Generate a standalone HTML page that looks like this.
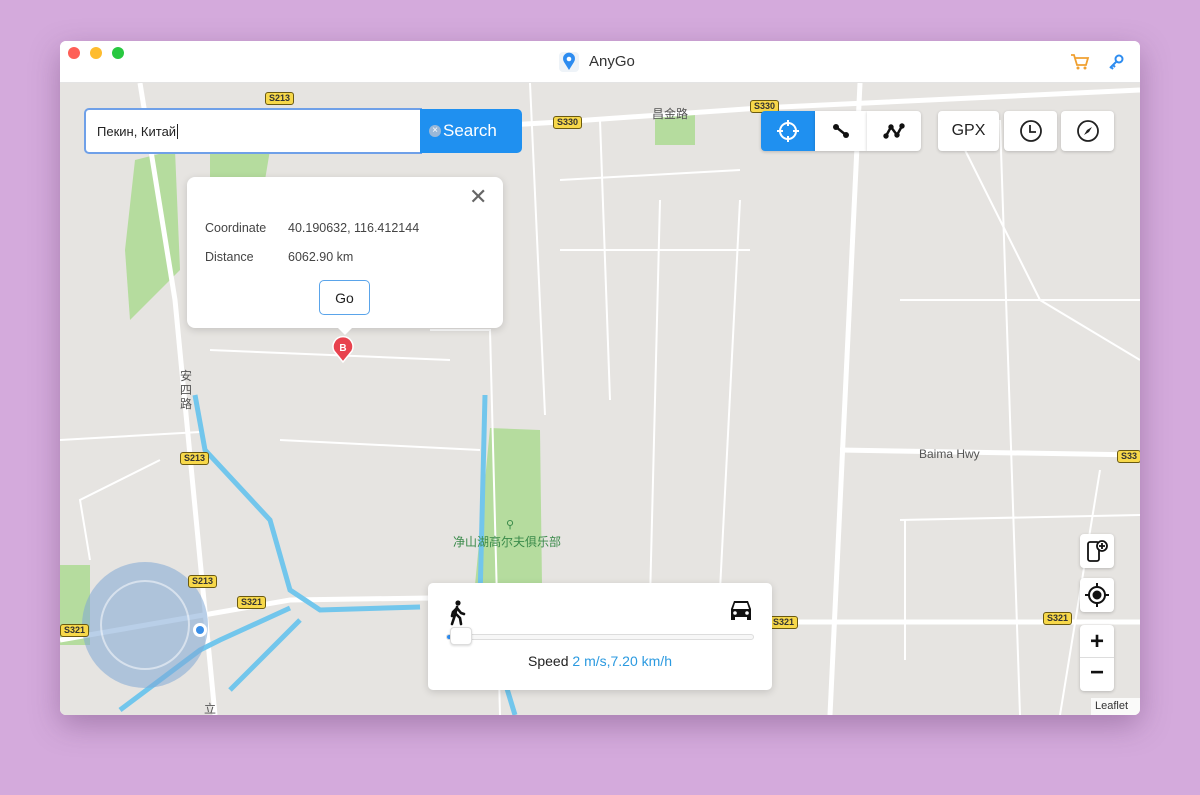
<!DOCTYPE html>
<html><head><meta charset="utf-8"><style>
*{margin:0;padding:0;box-sizing:border-box}
body{width:1200px;height:795px;background:#d4aadc;font-family:"Liberation Sans","Noto Sans CJK SC",sans-serif;position:relative;overflow:hidden}
.win{position:absolute;left:60px;top:41px;width:1080px;height:674px;border-radius:6px;overflow:hidden;background:#fff;box-shadow:0 10px 30px rgba(80,40,90,.35)}
.abs{position:absolute}
.tb{left:0;top:0;width:1080px;height:42px;background:#fff;border-bottom:1px solid #e4e4e4}
.dot{width:12px;height:12px;border-radius:50%;top:6px}
.btn{background:#fff;border-radius:4px;box-shadow:0 1px 3px rgba(0,0,0,.2);display:flex;align-items:center;justify-content:center}
.shield{position:absolute;background:#f7d84a;border:1px solid #6b5a10;border-radius:3px;font-size:9px;font-weight:bold;color:#333;padding:0 3px;line-height:11px}
</style></head><body>
<div class="win">
<svg class="abs" style="left:0;top:42px" width="1080" height="632" viewBox="60 83 1080 632">
<rect x="60" y="83" width="1080" height="632" fill="#e6e4e1"/>
<path d="M135 160 L175 150 L180 270 L130 320 L125 250 Z" fill="#b5dc9e"/>
<path d="M210 150 L270 150 L265 180 L210 180Z" fill="#b5dc9e"/>
<rect x="655" y="115" width="40" height="30" fill="#b5dc9e"/>
<path d="M490 428 L540 430 L542 585 L475 585 Z" fill="#b5dc9e"/>
<rect x="60" y="565" width="30" height="80" fill="#b5dc9e"/>
<g stroke="#fff" stroke-width="5" fill="none">
<path d="M140 83 L175 300 L215 715"/>
<path d="M420 130 L560 122 L760 108 L1140 90"/>
<path d="M60 640 L290 600 L430 598 L760 622 L1140 622"/>
<path d="M840 450 L1140 455"/>
<path d="M860 83 L830 715"/>
</g>
<g stroke="#fff" stroke-width="2" fill="none">
<path d="M530 83 L545 415"/><path d="M60 440 L200 432"/><path d="M900 520 L1140 515"/><path d="M905 520 L905 660"/>
<path d="M960 140 L1040 300 L1140 360"/><path d="M560 180 L740 170"/><path d="M600 120 L610 400"/>
<path d="M660 200 L650 600"/><path d="M740 200 L720 590"/><path d="M1000 120 L1020 715"/><path d="M900 300 L1140 300"/>
<path d="M1100 470 L1060 715"/><path d="M430 330 L490 330 L500 715"/><path d="M210 350 L450 360"/>
<path d="M280 440 L480 450"/><path d="M160 460 L80 500 L90 560"/><path d="M560 250 L750 250"/>
</g>
<g stroke="#72c6ec" stroke-width="5" fill="none">
<path d="M195 395 L205 450 L270 520 L290 590 L320 610 L420 607"/>
<path d="M485 395 L480 600 L515 715"/>
<path d="M120 710 L200 650 L220 640 L290 608"/>
<path d="M230 690 L300 620"/>
</g>
<circle cx="145" cy="625" r="63" fill="#7fa7d6" opacity=".55"/>
<circle cx="145" cy="625" r="44" fill="none" stroke="#fff" stroke-opacity=".5" stroke-width="2"/>
<circle cx="200" cy="630" r="7" fill="#fff"/><circle cx="200" cy="630" r="4" fill="#3a8fe8"/>
<path d="M343 362 L334 351 A10 10 0 1 1 352 351 Z" fill="#e8424e" stroke="#fff" stroke-width="1.5"/>
<text x="343" y="351" font-size="10" font-weight="bold" fill="#fff" text-anchor="middle" font-family="Liberation Sans">B</text>
<text x="652" y="118" font-size="12" fill="#555">昌金路</text>
<text x="180" y="380" font-size="12" fill="#555">安</text><text x="180" y="394" font-size="12" fill="#555">四</text><text x="180" y="408" font-size="12" fill="#555">路</text>
<text x="919" y="458" font-size="12" fill="#555">Baima Hwy</text>
<text x="453" y="546" font-size="12" fill="#3a8a4a">净山湖高尔夫俱乐部</text>
<text x="506" y="528" font-size="11" fill="#3a8a4a">⚲</text>
<text x="204" y="713" font-size="12" fill="#555">立</text>
</svg>
<div class="shield" style="left:205px;top:51px">S213</div>
<div class="shield" style="left:493px;top:75px">S330</div>
<div class="shield" style="left:690px;top:59px">S330</div>
<div class="shield" style="left:120px;top:411px">S213</div>
<div class="shield" style="left:128px;top:534px">S213</div>
<div class="shield" style="left:177px;top:555px">S321</div>
<div class="shield" style="left:0px;top:583px">S321</div>
<div class="shield" style="left:709px;top:575px">S321</div>
<div class="shield" style="left:983px;top:571px">S321</div>
<div class="shield" style="left:1057px;top:409px">S33</div>
<div class="abs tb"></div>
<div class="abs dot" style="left:8px;background:#fe5f57"></div>
<div class="abs dot" style="left:30px;background:#febc2e"></div>
<div class="abs dot" style="left:52px;background:#28c840"></div>
<svg class="abs" style="left:498px;top:9px" width="22" height="24" viewBox="0 0 22 24"><rect x="1" y="2" width="20" height="20" rx="4" fill="#eef3f8"/><path d="M11 20 L6 12 A6 6 0 1 1 16 12Z" fill="#2d8cf0"/><circle cx="11" cy="9" r="2.3" fill="#fff"/></svg>
<div class="abs" style="left:529px;top:12px;font-size:15px;color:#333">AnyGo</div>
<svg class="abs" style="left:1010px;top:12px" width="20" height="18" viewBox="0 0 20 18"><path d="M1 2 H4 L7 12 H16 L18 5 H5" fill="none" stroke="#f0a030" stroke-width="1.8"/><circle cx="8" cy="15" r="1.5" fill="#f0a030"/><circle cx="15" cy="15" r="1.5" fill="#f0a030"/></svg>
<svg class="abs" style="left:1047px;top:12px" width="18" height="18" viewBox="0 0 18 18"><circle cx="12" cy="6" r="3.5" fill="none" stroke="#2d8cf0" stroke-width="2"/><path d="M9.5 8.5 L3 15 M4 14 L6 16 M6 12 L8 14" stroke="#2d8cf0" stroke-width="2"/></svg>
<div class="abs" style="left:24px;top:67px;width:338px;height:46px;background:#fff;border:2px solid #6fa0e8;border-radius:5px 0 0 5px"></div>
<div class="abs" style="left:37px;top:83px;font-size:13px;color:#222">Пекин, Китай<span style="border-left:1px solid #222;margin-left:1px"></span></div>
<div class="abs" style="left:360px;top:68px;width:102px;height:44px;background:#1f90f0;border-radius:0 5px 5px 0;color:#fff;font-size:17px;display:flex;align-items:center;padding-left:9px"><span style="display:inline-block;width:12px;height:12px;border-radius:50%;background:#9ab8d8;color:#fff;font-size:10px;line-height:12px;text-align:center;margin-right:2px">×</span>Search</div>
<div class="abs btn" style="left:701px;top:70px;width:54px;height:40px;background:#1f90f0;border-radius:4px 0 0 4px"><svg width="26" height="26" viewBox="0 0 26 26" fill="none" stroke="#fff" stroke-width="2"><circle cx="13" cy="13" r="8"/><path d="M13 2V8M13 18V24M2 13H8M18 13H24"/></svg></div>
<div class="abs btn" style="left:755px;top:70px;width:52px;height:40px;border-radius:0"><svg width="20" height="20" viewBox="0 0 20 20"><path d="M5 6 L15 14" stroke="#111" stroke-width="2.5"/><circle cx="5" cy="6" r="3" fill="#111"/><circle cx="15" cy="14" r="3" fill="#111"/></svg></div>
<div class="abs btn" style="left:807px;top:70px;width:54px;height:40px;border-radius:0 4px 4px 0"><svg width="24" height="20" viewBox="0 0 24 20"><path d="M4 15 L9 6 L15 14 L20 5" stroke="#111" stroke-width="2.5" fill="none"/><circle cx="4" cy="15" r="2.7" fill="#111"/><circle cx="9" cy="6" r="2.7" fill="#111"/><circle cx="15" cy="14" r="2.7" fill="#111"/><circle cx="20" cy="5" r="2.7" fill="#111"/></svg></div>
<div class="abs btn" style="left:878px;top:70px;width:61px;height:40px;font-size:16px;color:#222">GPX</div>
<div class="abs btn" style="left:944px;top:70px;width:53px;height:40px"><svg width="24" height="24" viewBox="0 0 24 24" fill="none" stroke="#222" stroke-width="1.8"><circle cx="12" cy="12" r="10"/><path d="M11 6V13H17"/></svg></div>
<div class="abs btn" style="left:1001px;top:70px;width:53px;height:40px"><svg width="24" height="24" viewBox="0 0 24 24"><circle cx="12" cy="12" r="10" fill="none" stroke="#222" stroke-width="1.8"/><path d="M16 8 L13 13 L8 16 L11 11Z" fill="#222"/></svg></div>
<div class="abs" style="left:127px;top:136px;width:316px;height:151px;background:#fff;border-radius:8px;box-shadow:0 2px 8px rgba(0,0,0,.15)"></div>
<div class="abs" style="left:276px;top:285px;width:0;height:0;border-left:9px solid transparent;border-right:9px solid transparent;border-top:9px solid #fff"></div>
<div class="abs" style="left:409px;top:145px;font-size:22px;color:#666;line-height:22px">✕</div>
<div class="abs" style="left:145px;top:180px;font-size:12.5px;color:#444">Coordinate</div>
<div class="abs" style="left:228px;top:180px;font-size:12.5px;color:#444">40.190632, 116.412144</div>
<div class="abs" style="left:145px;top:209px;font-size:12.5px;color:#444">Distance</div>
<div class="abs" style="left:228px;top:209px;font-size:12.5px;color:#444">6062.90 km</div>
<div class="abs" style="left:259px;top:239px;width:51px;height:35px;border:1px solid #5aa4ea;border-radius:5px;font-size:14px;color:#222;display:flex;align-items:center;justify-content:center">Go</div>
<div class="abs" style="left:368px;top:542px;width:344px;height:107px;background:#fff;border-radius:5px;box-shadow:0 2px 8px rgba(0,0,0,.15)"></div>
<svg class="abs" style="left:388px;top:559px" width="20" height="26" viewBox="0 0 20 26"><circle cx="10" cy="3" r="2.6" fill="#111"/><path d="M9 7 L7 15 L4 24 M8 14 L12 18 L13 24 M9 8 L5 12 L4 16 M9 8 L13 13 L16 14" stroke="#111" stroke-width="2.6" fill="none" stroke-linecap="round" stroke-linejoin="round"/></svg>
<svg class="abs" style="left:667px;top:557px" width="28" height="26" viewBox="0 0 28 26"><path d="M4 11 L7 3 H21 L24 11 V22 H20 V19 H8 V22 H4Z" fill="#111"/><path d="M8 5 H20 L22 11 H6Z" fill="#fff"/><circle cx="8" cy="15" r="1.8" fill="#fff"/><circle cx="20" cy="15" r="1.8" fill="#fff"/></svg>
<div class="abs" style="left:386px;top:593px;width:308px;height:6px;border:1px solid #ddd;border-radius:3px;background:#f7f7f7"></div>
<div class="abs" style="left:387px;top:594px;width:6px;height:4px;background:#2d8cf0;border-radius:2px"></div>
<div class="abs" style="left:390px;top:586px;width:22px;height:18px;background:#fff;border:1px solid #ddd;border-radius:4px;box-shadow:0 1px 2px rgba(0,0,0,.15)"></div>
<div class="abs" style="left:368px;top:612px;width:344px;text-align:center;font-size:14px;color:#222">Speed <span style="color:#2b9ae0">2 m/s,7.20 km/h</span></div>
<div class="abs btn" style="left:1020px;top:493px;width:34px;height:34px"><svg width="26" height="26" viewBox="0 0 26 26" fill="none" stroke="#111" stroke-width="1.8"><rect x="4" y="4" width="11" height="19" rx="2"/><circle cx="18" cy="8" r="5" fill="#fff"/><path d="M18 5V11M15 8H21"/></svg></div>
<div class="abs btn" style="left:1020px;top:537px;width:34px;height:34px"><svg width="26" height="26" viewBox="0 0 26 26" fill="none" stroke="#111" stroke-width="2"><circle cx="13" cy="13" r="8"/><circle cx="13" cy="13" r="3.5" fill="#111"/><path d="M13 1V5M13 21V25M1 13H5M21 13H25"/></svg></div>
<div class="abs btn" style="left:1020px;top:584px;width:34px;height:66px;flex-direction:column;font-size:24px;color:#111;font-weight:bold"><div style="height:33px;line-height:33px;border-bottom:1px solid #ddd;width:100%;text-align:center">+</div><div style="height:33px;line-height:30px">−</div></div>
<div class="abs" style="left:1031px;top:657px;width:49px;height:17px;background:rgba(255,255,255,.8);font-size:11px;color:#333;padding:2px 4px">Leaflet</div>
</div>
</body></html>
